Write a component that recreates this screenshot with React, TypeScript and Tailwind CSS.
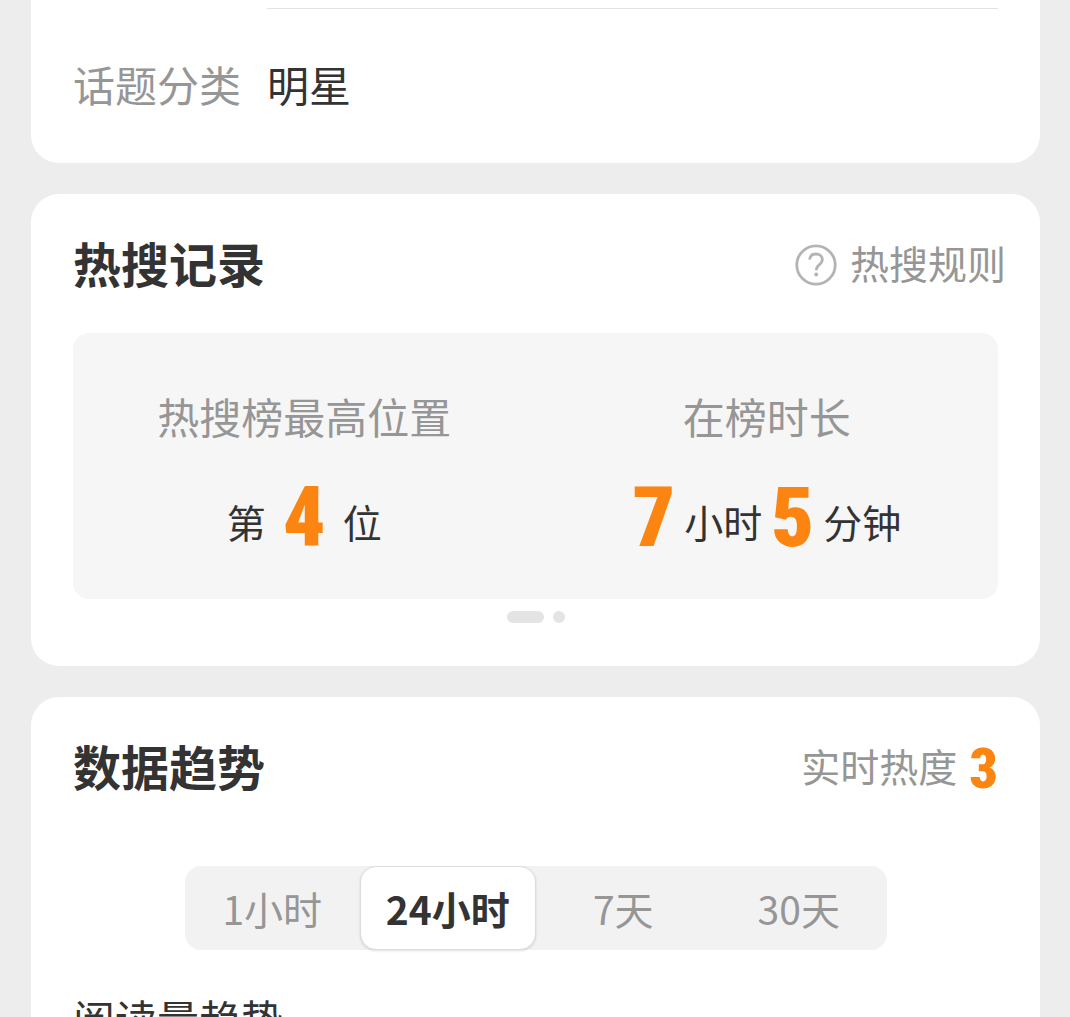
import React, { useState } from 'react';
import clsx from 'clsx';

interface CardProps {
  children: React.ReactNode;
  className?: string;
}

interface CardHeaderProps {
  title: string;
  children: React.ReactNode;
}

const ranges = ['1小时', '24小时', '7天', '30天'];

function Card({ children, className }: CardProps) {
  return (
    <section className={clsx('bg-white px-[42px]', className)}>{children}</section>
  );
}

function CardHeader({ title, children }: CardHeaderProps) {
  return (
    <div className="flex items-center justify-between">
      <h2 className="text-[48px] leading-[72px] font-bold">{title}</h2>
      {children}
    </div>
  );
}

function BigNumber({ children }: { children: React.ReactNode }) {
  return (
    <span className="font-['Roboto_Condensed','Roboto',sans-serif] text-[84px] leading-[80px] font-black text-[#fb8510]">
      {children}
    </span>
  );
}

function Unit({ children }: { children: React.ReactNode }) {
  return <span className="text-[39px] leading-[74px]">{children}</span>;
}

function HelpIcon() {
  return (
    <svg
      className="size-[42px] text-[#b4b4b4]"
      viewBox="0 0 42 42"
      fill="none"
      stroke="currentColor"
      strokeWidth="2.8"
      aria-hidden="true"
    >
      <circle cx="21" cy="21" r="19.2" />
      <path d="M14.6 15.6c.3-3.4 2.8-5.6 6.4-5.6 3.7 0 6.3 2.2 6.3 5.5 0 2.4-1.3 3.8-3.2 5.3-2 1.6-2.8 2.6-2.8 5.4" />
      <circle cx="21.2" cy="30.6" r="2" fill="currentColor" stroke="none" />
    </svg>
  );
}

export default function App() {
  const [range, setRange] = useState('24小时');

  return (
    <main className="flex h-screen flex-col gap-[31px] overflow-hidden bg-[#ededed] pr-[30px] pl-[31px] font-['Noto_Sans_CJK_SC',sans-serif] text-[#333333]">
      {/* Topic category */}
      <Card className="shrink-0 rounded-b-[28px] pt-2 pb-[49px]">
        <dl className="flex text-[42px] leading-[60px]">
          <dt className="w-[194px] shrink-0 pt-[46px] text-[#969696]">话题分类</dt>
          <dd className="flex-1 border-t border-[#e2e2e2] pt-[45px]">明星</dd>
        </dl>
      </Card>

      {/* Hot search record */}
      <Card className="shrink-0 rounded-[28px] pt-8 pb-[43px]">
        <CardHeader title="热搜记录">
          <a href="#rules" className="-mr-2 flex items-end gap-[13px] text-[39px] leading-[48px] text-[#969696]">
            <HelpIcon />
            热搜规则
          </a>
        </CardHeader>

        <div className="mt-[35px] grid grid-cols-2 rounded-2xl bg-[#f6f6f6] pt-[53px] pb-[41px]">
          <div className="flex flex-col items-center gap-8">
            <h3 className="text-[42px] leading-[60px] text-[#969696]">热搜榜最高位置</h3>
            <p className="flex items-end gap-[17px]">
              <Unit>第</Unit>
              <BigNumber>4</BigNumber>
              <Unit>位</Unit>
            </p>
          </div>
          <div className="flex flex-col items-center gap-8">
            <h3 className="text-[42px] leading-[60px] text-[#969696]">在榜时长</h3>
            <p className="flex items-end gap-[9px]">
              <BigNumber>7</BigNumber>
              <Unit>小时</Unit>
              <BigNumber>5</BigNumber>
              <Unit>分钟</Unit>
            </p>
          </div>
        </div>

        {/* Pager */}
        <div className="mt-3 flex justify-center gap-[9px]">
          <span className="h-3 w-[37px] rounded-full bg-[#e4e4e4]" />
          <span className="size-3 rounded-full bg-[#e4e4e4]" />
        </div>
      </Card>

      {/* Data trend */}
      <Card className="shrink-0 rounded-t-[28px] pt-8 pb-10">
        <CardHeader title="数据趋势">
          <p className="flex items-end gap-3 text-[39px] leading-[72px] text-[#969696]">
            实时热度
            <span className="font-['Roboto_Condensed','Roboto',sans-serif] text-[56px] leading-[64px] font-black text-[#fb8510]">
              3
            </span>
          </p>
        </CardHeader>

        <div className="mx-auto mt-[65px] grid h-[84px] max-w-[702px] grid-cols-4 rounded-2xl bg-[#f2f2f2]">
          {ranges.map((item) => (
            <button
              key={item}
              type="button"
              aria-pressed={item === range}
              onClick={() => setRange(item)}
              className={clsx(
                'rounded-2xl text-[39px] leading-[60px]',
                item === range
                  ? 'border border-[#dddddd] bg-white font-bold shadow-sm'
                  : 'text-[#969696]'
              )}
            >
              {item}
            </button>
          ))}
        </div>

        <h3 className="mt-[38px] text-[42px] leading-[60px]">阅读量趋势</h3>
      </Card>
    </main>
  );
}
